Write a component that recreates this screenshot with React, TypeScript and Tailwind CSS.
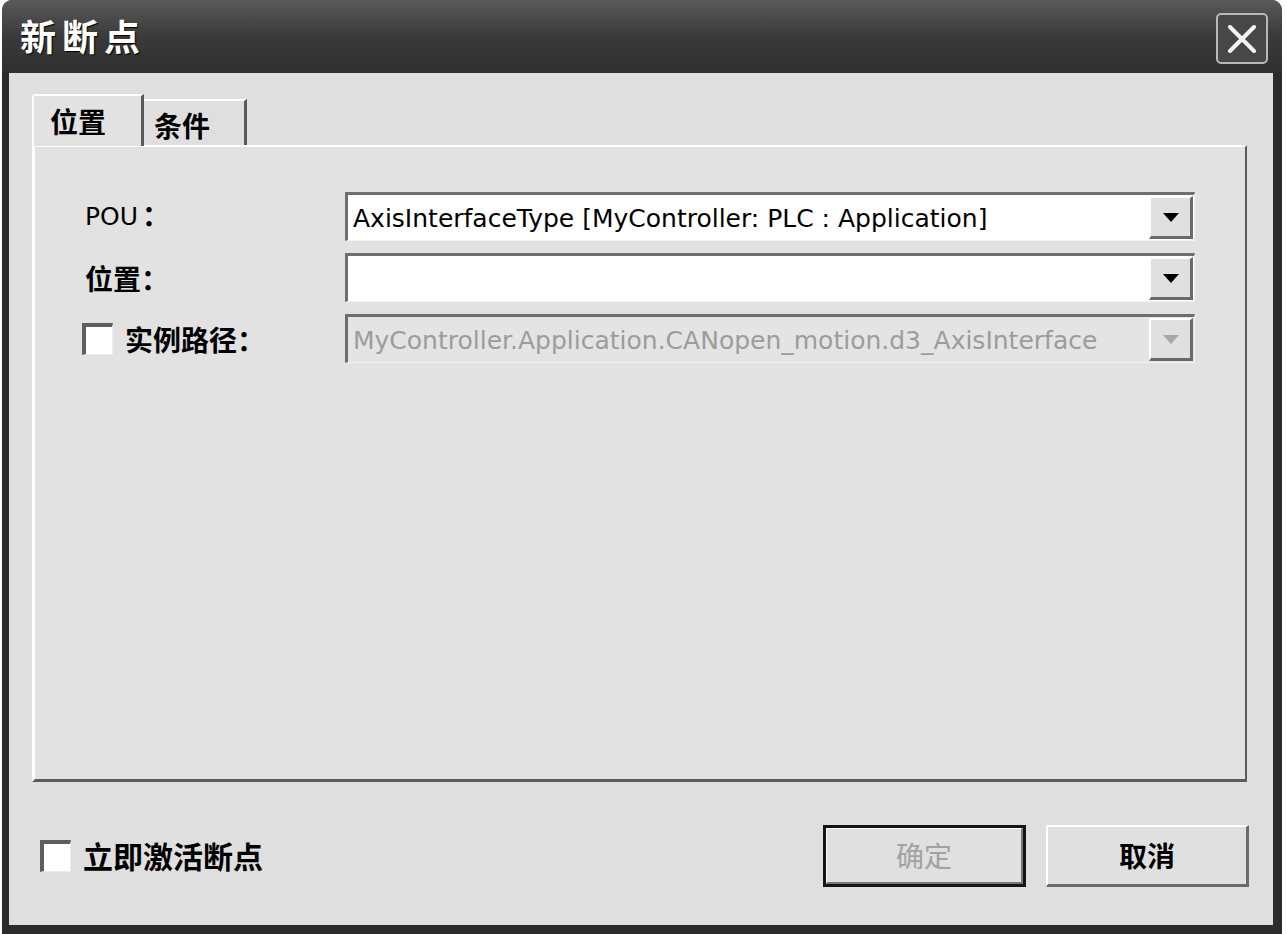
import React from "react";

const FONT = "font-['DejaVu_Sans','Noto_Sans_CJK_SC',sans-serif]";
const CJK = "font-['Noto_Sans_CJK_SC',sans-serif]";

function Arrow({ disabled }: { disabled?: boolean }) {
  return (
    <svg width="16" height="9" viewBox="0 0 16 9">
      <path d="M0 0 H16 L8 9 Z" fill={disabled ? "#a8a8a8" : "#000"} />
    </svg>
  );
}

function Combo({ text, disabled }: { text?: string; disabled?: boolean }) {
  return (
    <div
      className={`h-[49px] flex border-t-[3px] border-l-[3px] border-t-[#6e6e6e] border-l-[#6e6e6e] border-r border-b border-r-[#f2f2f2] border-b-[#f2f2f2] ${
        disabled ? "bg-[#e4e4e4]" : "bg-white"
      }`}
    >
      <div
        className={`flex-1 flex items-center pl-[5px] pt-[2px] text-[25px] leading-none whitespace-nowrap overflow-hidden ${
          disabled ? "text-[#9c9c9c]" : "text-black"
        }`}
      >
        {text}
      </div>
      <div className="w-[44px] my-[1px] mr-[1px] flex items-center justify-center bg-[#e0e0e0] border-t-2 border-l-2 border-t-white border-l-white border-r-[3px] border-b-[3px] border-r-[#6a6a6a] border-b-[#6a6a6a]">
        <Arrow disabled={disabled} />
      </div>
    </div>
  );
}

function Check() {
  return (
    <div className="w-[31px] h-[32px] bg-white border-t-4 border-l-4 border-t-[#5e5e5e] border-l-[#5e5e5e] border-r border-b border-r-[#ededed] border-b-[#ededed]" />
  );
}

export default function App() {
  return (
    <div className={`min-h-screen bg-white ${FONT}`}>
      <div className="ml-[2px] w-[1280px] h-[934px] flex flex-col rounded-t-[10px] bg-[#2c2c2c] overflow-hidden">
        {/* title bar */}
        <div className="h-[73px] flex items-center justify-between pl-[18px] pr-[14px] bg-gradient-to-b from-[#5a5a5a] via-[#3a3a3a] to-[#2f2f2f]">
          <div className={`${CJK} text-white text-[36px] font-bold tracking-[6px] [text-shadow:1px_1px_1px_#000] pb-[4px]`}>
            新断点
          </div>
          <div className="w-[52px] h-[51px] mt-[4px] rounded-[5px] border-2 border-[#b8b8b8] bg-[#474747] flex items-center justify-center">
            <svg width="30" height="28" viewBox="0 0 30 28">
              <path d="M3 2 L27 26 M27 2 L3 26" stroke="#f4f4f4" strokeWidth="4" strokeLinecap="round" />
            </svg>
          </div>
        </div>

        {/* client area */}
        <div className="flex-1 ml-[7px] mr-[9px] mb-[9px] bg-[#dfdfdf] flex flex-col pt-[21px] pl-[23px] pr-[26px]">
          {/* tabs */}
          <div className={`${CJK} flex items-end h-[51px]`}>
            <div className="w-[112px] h-[52px] -mb-[1px] z-10 bg-[#e2e2e2] border-t-2 border-l-2 border-t-white border-l-white border-r-[3px] border-r-[#5a5a5a] rounded-tl-[3px] flex items-center pl-[16px] text-[28px] font-bold text-black">
              位置
            </div>
            <div className="w-[103px] h-[46px] bg-[#dfdfdf] border-t-2 border-t-white border-r-[3px] border-r-[#5a5a5a] flex items-center pl-[10px] pt-[4px] text-[28px] font-bold text-black">
              条件
            </div>
          </div>
          {/* panel */}
          <div className="h-[637px] bg-[#e2e2e2] border-t-2 border-l-[3px] border-t-white border-l-white border-r-2 border-b-[3px] border-r-[#5c5c5c] border-b-[#5c5c5c] pt-[45px] pl-[50px] pr-[50px]">
            <div className="grid grid-cols-[260px_850px] gap-y-3 items-center">
              <div className="text-[25px] text-black flex items-center">
                POU
                <span className={`${CJK} font-bold text-[28px] ml-[4px] -translate-y-[3px]`}>：</span>
              </div>
              <Combo text="AxisInterfaceType [MyController: PLC : Application]" />
              <div className={`${CJK} text-[28px] text-black font-bold`}>位置：</div>
              <Combo />
              <div className="flex items-center gap-[12px] -ml-[3px]">
                <Check />
                <span className={`${CJK} text-[28px] text-black font-bold`}>实例路径：</span>
              </div>
              <Combo text="MyController.Application.CANopen_motion.d3_AxisInterface" disabled />
            </div>
          </div>
          {/* footer */}
          <div className={`${CJK} flex-1 flex items-center justify-between pl-[8px] pt-[4px] -mr-[2px]`}>
            <div className="flex items-center gap-[12px]">
              <Check />
              <span className="text-[30px] text-black font-bold">立即激活断点</span>
            </div>
            <div className="flex gap-[20px]">
              <div className="w-[203px] h-[62px] border-[3px] border-[#151515] bg-[#e0e0e0] flex">
                <div className="flex-1 border-t border-l border-t-white border-l-white border-r-2 border-b-2 border-r-[#777] border-b-[#777] flex items-center justify-center text-[28px] text-[#a2a2a2]">
                  确定
                </div>
              </div>
              <div className="w-[203px] h-[62px] bg-[#e0e0e0] border-t-2 border-l-2 border-t-white border-l-white border-r-[3px] border-b-[3px] border-r-[#6a6a6a] border-b-[#6a6a6a] flex items-center justify-center text-[28px] font-bold text-black">
                取消
              </div>
            </div>
          </div>
        </div>
      </div>
    </div>
  );
}
